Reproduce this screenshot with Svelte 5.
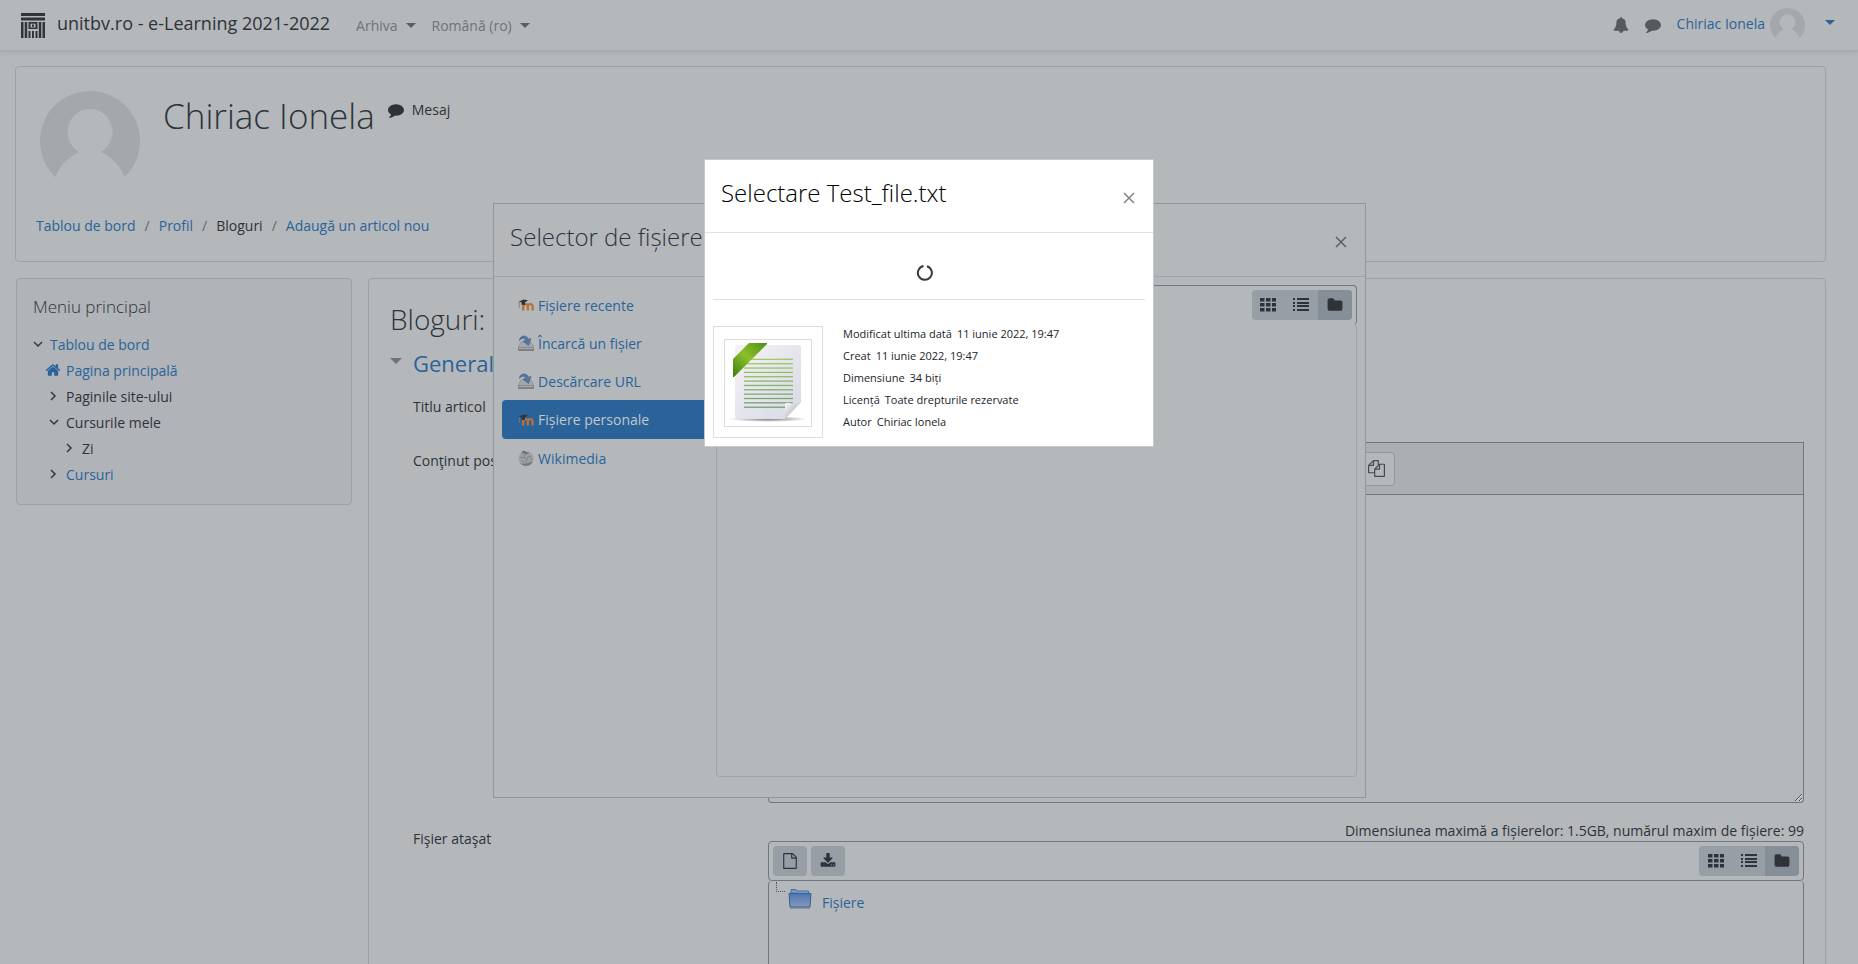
<script>
  const icons = {
    bell: 'M912 1696q0-16-16-16-59 0-101.5-42.5t-42.5-101.5q0-16-16-16t-16 16q0 73 51.5 124.5t124.5 51.5q16 0 16-16zm816-288q0 52-38 90t-90 38h-448q0 106-75 181t-181 75-181-75-75-181h-448q-52 0-90-38t-38-90q50-42 91-88t85-119.5 74.5-158.5 50-206 19.5-260q0-152 117-282.5t307-158.5q-8-19-8-39 0-40 28-68t68-28 68 28 28 68q0 20-8 39 190 28 307 158.5t117 282.5q0 139 19.5 260t50 206 74.5 158.5 85 119.5 91 88z',
    comment: 'M1792 896q0 174-120 321.5t-326 233-450 85.5q-70 0-145-8-198 175-460 242-49 14-114 22-17 2-30.5-9t-17.5-29v-1q-3-4-.5-12t2-10 4.5-9.5l6-9 7-8.5 8-9q7-8 31-34.5t34.5-38 31-39.5 32.5-51 27-59 26-76q-157-89-247.5-220t-90.5-281q0-130 71-248.5t191-204.5 286-136.5 348-50.5q244 0 450 85.5t326 233 120 321.5z',
    home: 'M1472 992v480q0 26-19 45t-45 19h-384v-384h-256v384h-384q-26 0-45-19t-19-45v-480q0-1 .5-3t.5-3l575-474 575 474q1 2 1 6zm223-69l-62 74q-8 9-21 11h-3q-13 0-21-7l-692-577-692 577q-12 8-24 7-13-2-21-11l-62-74q-8-10-7-23.5t11-21.5l719-599q32-26 76-26t76 26l244 204v-195q0-14 9-23t23-9h192q14 0 23 9t9 23v408l219 182q10 8 11 21.5t-7 23.5z',
    folder: 'M1728 608v704q0 92-66 158t-158 66h-1216q-92 0-158-66t-66-158v-960q0-92 66-158t158-66h320q92 0 158 66t66 158v32h672q92 0 158 66t66 158z',
    file: 'M1596 380q28 28 48 76t20 88v1152q0 40-28 68t-68 28h-1344q-40 0-68-28t-28-68v-1600q0-40 28-68t68-28h896q40 0 88 20t76 48zm-444-244v376h376q-10-29-22-41l-313-313q-12-12-41-22zm384 1528v-1024h-416q-40 0-68-28t-28-68v-416h-768v1536h1280z',
    download: 'M1344 1344q0-26-19-45t-45-19-45 19-19 45 19 45 45 19 45-19 19-45zm256 0q0-26-19-45t-45-19-45 19-19 45 19 45 45 19 45-19 19-45zm128-224v320q0 40-28 68t-68 28h-1472q-40 0-68-28t-28-68v-320q0-40 28-68t68-28h465l135 136q58 56 136 56t136-56l136-136h464q40 0 68 28t28 68zm-325-569q17 41-14 70l-448 448q-18 19-45 19t-45-19l-448-448q-31-29-14-70 17-39 59-39h256v-448q0-26 19-45t45-19h256q26 0 45 19t19 45v448h256q42 0 59 39z',
    files: 'M1696 384q40 0 68 28t28 68v1216q0 40-28 68t-68 28h-960q-40 0-68-28t-28-68v-288h-544q-40 0-68-28t-28-68v-672q0-40 20-88t48-76l408-408q28-28 76-48t88-20h416q40 0 68 28t28 68v328q68-40 128-40h416zm-544 213l-299 299h299v-299zm-640-384l-299 299h299v-299zm196 647l316-316v-416h-384v416q0 40-28 68t-68 28h-416v640h512v-256q0-40 20-88t48-76zm956 804v-1152h-384v416q0 40-28 68t-68 28h-416v640h896z'
  };

  const tree = [
    { text: 'Tablou de bord', level: 0, mark: 'down', link: true },
    { text: 'Pagina principală', level: 1, mark: 'home', link: true },
    { text: 'Paginile site-ului', level: 1, mark: 'right' },
    { text: 'Cursurile mele', level: 1, mark: 'down' },
    { text: 'Zi', level: 2, mark: 'right' },
    { text: 'Cursuri', level: 1, mark: 'right', link: true }
  ];

  const repos = [
    { text: 'Fișiere recente', icon: 'moodle' },
    { text: 'Încarcă un fișier', icon: 'upload' },
    { text: 'Descărcare URL', icon: 'upload' },
    { text: 'Fișiere personale', icon: 'moodle' },
    { text: 'Wikimedia', icon: 'wiki' }
  ];
  let activeRepo = $state(3);

  const details = [
    ['Modificat ultima dată', '11 iunie 2022, 19:47'],
    ['Creat', '11 iunie 2022, 19:47'],
    ['Dimensiune', '34 biți'],
    ['Licență', 'Toate drepturile rezervate'],
    ['Autor', 'Chiriac Ionela']
  ];
  const lines = [0, 1, 2, 3, 4, 5, 6, 7, 8, 9, 10, 11];
</script>

{#snippet fa(name, size)}
  <svg class="fa" width={size} height={size} viewBox="0 0 1792 1792" aria-hidden="true"><path d={icons[name]} /></svg>
{/snippet}

{#snippet avatar(size)}
  <svg class="avatar" width={size} height={size} viewBox="0 0 100 100" aria-hidden="true">
    <path fill="#a4a8ab" d="M50 0a50 50 0 0 1 34.500 86.200C81 75 73 67 61 61A22.500 23 0 1 0 39 61C27 67 19 75 15.500 86.200A50 50 0 0 1 50 0z" />
  </svg>
{/snippet}

{#snippet closeIcon()}
  <svg width="12" height="12" viewBox="0 0 12 12" aria-hidden="true"><path d="M1 1l10 10M11 1L1 11" fill="none" stroke="currentColor" stroke-width="1.500" /></svg>
{/snippet}

{#snippet views()}
  <div class="views" role="group">
    <button type="button" aria-label="Pictograme">
      <svg width="16" height="14" viewBox="0 0 16 14" aria-hidden="true">
        {#each [0, 5, 10] as y}
          {#each [0, 6, 12] as x}<rect {x} {y} width="4.500" height="3.500" />{/each}
        {/each}
      </svg>
    </button>
    <button type="button" aria-label="Listă">
      <svg width="16" height="14" viewBox="0 0 16 14" aria-hidden="true">
        {#each [0, 4, 7, 11] as y}<rect x="0" {y} width="2" height="2" /><rect x="4" {y} width="12" height="2" />{/each}
      </svg>
    </button>
    <button type="button" class="on" aria-label="Arbore">{@render fa('folder', 16)}</button>
  </div>
{/snippet}

<div class="page">
  <nav class="navbar">
    <a class="brand" href="#acasa">
      <svg width="24" height="25" viewBox="0 0 24 25" aria-hidden="true">
        <path d="M0 0h24v3H0zM0 4.500h24V7.500H0zM0 9h2.500v16H0zM3.700 9h2.500v16H3.700zM17.800 9h2.500v16h-2.500zM21.500 9H24v16h-2.500zM7.500 9h9v7h-9zM7.500 18h2v7h-2zM11 18h2v7h-2zM14.500 18h2v7h-2z" fill="#30343b" />
        <path d="M9.500 10.700h5v3.800h-5z" fill="#b4b8bb" /><path d="M11 11.500h2v2.200h-2z" fill="#30343b" />
      </svg>
      <span>unitbv.ro - e-Learning 2021-2022</span>
    </a>
    <button class="menu">Arhiva <i class="caret"></i></button>
    <button class="menu">Română (ro) <i class="caret"></i></button>
    <span class="grow"></span>
    <button class="navicon" aria-label="Notificări">{@render fa('bell', 16)}</button>
    <button class="navicon" aria-label="Mesaje">{@render fa('comment', 16)}</button>
    <button class="user"><span>Chiriac Ionela</span>{@render avatar(35)}<i class="caret"></i></button>
  </nav>

  <header class="card head">
    <div class="who">
      {@render avatar(100)}
      <h1>Chiriac Ionela</h1>
      <button class="message">{@render fa('comment', 16)}<span>Mesaj</span></button>
    </div>
    <ol class="crumbs">
      <li><a href="#bord">Tablou de bord</a></li>
      <li><a href="#profil">Profil</a></li>
      <li>Bloguri</li>
      <li><a href="#nou">Adaugă un articol nou</a></li>
    </ol>
  </header>

  <div class="columns">
    <aside class="card side">
      <h5>Meniu principal</h5>
      <ul>
        {#each tree as node}
          <li class="level{node.level}">
            <span class="mark">
              {#if node.mark === 'home'}
                {@render fa('home', 16)}
              {:else}
                <svg class="chevron" width="10" height="10" viewBox="0 0 10 10" aria-hidden="true"><path d={node.mark === 'down' ? 'M1 3l4 4 4-4' : 'M2 1l4 4-4 4'} /></svg>
              {/if}
            </span>
            {#if node.link}<a href="#nod">{node.text}</a>{:else}<span>{node.text}</span>{/if}
          </li>
        {/each}
      </ul>
    </aside>

    <main class="card main">
      <h2>Bloguri:</h2>
      <h3><i class="fold"></i><a href="#general">General</a></h3>
      <form>
        <div class="row first">
          <label for="title">Titlu articol</label>
          <input id="title" type="text" />
        </div>
        <div class="row">
          <label for="body">Conţinut postare</label>
          <div class="editor">
            <div class="etools"><button type="button" aria-label="Gestionare fișiere">{@render fa('files', 17)}</button></div>
            <textarea id="body"></textarea>
          </div>
        </div>
        <div class="row attach">
          <span class="label">Fişier ataşat</span>
          <div>
            <p class="limits">Dimensiunea maximă a fișierelor: 1.5GB, numărul maxim de fișiere: 99</p>
            <div class="ftools">
              <button class="tool" type="button" aria-label="Adaugă">{@render fa('file', 16)}</button>
              <button class="tool" type="button" aria-label="Descarcă">{@render fa('download', 16)}</button>
              <span class="grow"></span>
              {@render views()}
            </div>
            <div class="files">
              <i class="branch"></i>
              <svg width="24" height="22" viewBox="0 0 24 22" aria-hidden="true">
                <defs><linearGradient id="fold" x1="0" y1="0" x2="0" y2="1"><stop offset="0" stop-color="#4d77b4" /><stop offset="1" stop-color="#8499b8" /></linearGradient></defs>
                <path d="M3 5V1.500h5l1 1.500h11.500V6z" fill="#7f9cc0" stroke="#466f9f" />
                <path d="M1 5.500h22l-1 13.500H2z" fill="url(#fold)" stroke="#35629c" />
                <path d="M2 20h20" stroke="#6c7276" />
              </svg>
              <a href="#fisiere">Fișiere</a>
            </div>
          </div>
        </div>
      </form>
    </main>
  </div>
</div>

<div class="layer">
  <section class="picker" aria-label="Selector de fișiere">
    <div class="phead"><h4>Selector de fișiere</h4><button class="close" aria-label="Închide">{@render closeIcon()}</button></div>
    <div class="pbody">
      <div class="repos">
        {#each repos as repo, i}
          <button class:active={i === activeRepo} onclick={() => (activeRepo = i)}>
            <svg width="16" height="16" viewBox="0 0 16 16" aria-hidden="true">
              {#if repo.icon === 'moodle'}
                <path d="M5.200 13.500V9.500a2.200 2.200 0 0 1 4.600 0V13.500M9.800 9.500a2.300 2.300 0 0 1 4.800 0V13.500" fill="none" stroke="#b9703a" stroke-width="2.300" />
                <path d="M0.500 4.800L5.500 2.500l4.500.7-3 2.300v2.500L3.500 7.700V5.300z" fill="#30343b" /><path d="M1.300 5v6" stroke="#777b7e" stroke-width=".8" />
              {:else if repo.icon === 'upload'}
                <path d="M3 7h10l3 5.500H0z" fill="#a3a7ab" stroke="#85898c" stroke-width=".6" /><path d="M0 12.500h16V16H0z" fill="#7d8184" /><path d="M1 13.500h14" stroke="#a6aaad" />
                <path d="M1.500 5.500C1.500.500 8.500-1 10.500 4.200L13 3.500 10.500 10.500 5 6.200l2.500-.9C6.500 2.500 3.500 2.800 1.500 5.500z" fill="#57759e" stroke="#3f5f88" stroke-width=".6" />
              {:else}
                <circle cx="8" cy="8.500" r="7.500" fill="#9da1a3" />
                <path d="M2 13a7.500 7.500 0 0 0 13-2c-4 2-9 4-13 2z" fill="#74787a" />
                <path d="M4 3l3 1.500M7 4.500L6 8l3 1.500L10.500 6l3 1M2 7l4 1M9 9.500l-1 4M3.500 11l3 1M12 8.500l2.500 1" fill="none" stroke="#7d8183" stroke-width=".9" />
                <path d="M4 2.500l2-1.200 2 2.200 2.500-1" fill="none" stroke="#5d6163" stroke-width="1.200" />
              {/if}
            </svg>
            <span>{repo.text}</span>
          </button>
        {/each}
      </div>
      <div class="browse">
        <div class="btools">{@render views()}</div>
        <div class="blist"></div>
      </div>
    </div>
  </section>
</div>

<div class="layer top">
  <section class="select" aria-label="Selectare Test_file.txt">
    <div class="phead"><h4>Selectare Test_file.txt</h4><button class="close" aria-label="Închide">{@render closeIcon()}</button></div>
    <div class="loading">
      <svg width="18" height="18" viewBox="0 0 18 18" aria-hidden="true"><path d="M11 2.200A7 7 0 1 1 7.500 2" fill="none" stroke="#373a3c" stroke-width="2" /></svg>
    </div>
    <div class="info">
      <div class="thumb">
        <svg width="86" height="86" viewBox="0 0 86 86" aria-hidden="true">
          <defs>
            <linearGradient id="paper" x1="0" y1="0" x2="1" y2="1"><stop offset="0" stop-color="#f3f3f6" /><stop offset="1" stop-color="#d7d8e3" /></linearGradient>
            <linearGradient id="ribbon" x1="0" y1="1" x2="1" y2="0"><stop offset="0" stop-color="#3c7d0c" /><stop offset=".5" stop-color="#8cc02a" /><stop offset="1" stop-color="#4c8e12" /></linearGradient>
            <linearGradient id="ink" gradientUnits="userSpaceOnUse" x1="0" y1="18" x2="0" y2="70"><stop offset="0" stop-color="#a2cc5c" /><stop offset="1" stop-color="#719a74" /></linearGradient>
            <linearGradient id="curl" x1="0" y1="0" x2="1" y2="1"><stop offset="0" stop-color="#ffffff" /><stop offset=".5" stop-color="#c9cad2" /><stop offset=".6" stop-color="#8f9098" /></linearGradient>
            <radialGradient id="shade"><stop offset="0" stop-color="#777" /><stop offset="1" stop-color="#777" stop-opacity="0" /></radialGradient>
          </defs>
          <ellipse cx="43" cy="79" rx="39" ry="3" fill="url(#shade)" />
          <path d="M13 5h60a3 3 0 0 1 3 3v54L60 79H13a3 3 0 0 1-3-3V8a3 3 0 0 1 3-3z" fill="url(#paper)" />
          {#each lines as n}
            <rect x="19" y={18.700 + n * 4.350} width={n === 11 ? 42 : 49} height="1.300" fill="url(#ink)" />
          {/each}
          <path d="M60 79V66q0-4 4-3 6 2 12-1z" fill="url(#curl)" />
          <path d="M24 3h18v1L9 37H8V19z" fill="url(#ribbon)" />
        </svg>
      </div>
      <dl>
        {#each details as [name, value]}
          <div><dt>{name}</dt><dd>{value}</dd></div>
        {/each}
      </dl>
    </div>
  </section>
</div>

<style>
  :global(body) {
    margin: 0;
    overflow: hidden;
    background: #b4b8bb;
    color: #2e3339;
    font: 14px/21px "Open Sans", "Noto Sans", sans-serif;
  }
  :global(*) { box-sizing: border-box; }
  button { border: 0; padding: 0; background: none; color: inherit; font: inherit; cursor: pointer; }
  a { color: #2a639a; text-decoration: none; }
  h1, h2, h3, h4, h5, ul, ol, p, dl, dd { margin: 0; padding: 0; }
  h1, h2, h4, h5 { font-weight: 300; }
  ul, ol { list-style: none; }
  svg { display: block; flex: none; }
  .fa { fill: currentColor; }
  .grow { flex: 1; }
  .card { border: 1px solid #9da1a4; border-radius: 4px; }
  .caret { border: 5px solid transparent; border-top-color: currentColor; border-bottom: 0; }

  .page { height: 100vh; overflow: hidden; }
  .navbar {
    display: flex; align-items: center; height: 51px; padding: 0 23px 0 21px;
    border-bottom: 1px solid #a8acaf; box-shadow: 0 2px 4px #a8acaf;
  }
  .brand { display: flex; align-items: center; gap: 12px; margin-right: 26px; color: #2e3339; font-size: 18px; line-height: 24px; }
  .brand span { padding-bottom: 4px; }
  .menu { display: flex; align-items: center; gap: 8px; margin-right: 16px; color: #6f7376; }
  .menu .caret { color: #5a5e61; }
  .navicon { margin-right: 16px; color: #555a5d; }
  .user { display: flex; align-items: center; gap: 5px; color: #2a639a; }
  .user span { padding-bottom: 4px; }
  .user .caret { margin: 0 0 6px 15px; }

  .head { margin: 15px 32px 0 15px; padding: 24px 20px; height: 196px; }
  .who { display: flex; align-items: flex-start; padding-left: 4px; }
  h1 { margin-left: 23px; font-size: 35px; line-height: 50px; }
  .message { display: flex; align-items: center; gap: 8px; margin: 8px 0 0 13px; }
  .crumbs { display: flex; margin-top: 24px; }
  .crumbs li + li::before { content: "/"; padding: 0 9px; color: #63676b; }

  .columns { display: grid; grid-template-columns: 336px 1fr; gap: 16px; align-items: start; margin: 16px 32px 0 16px; }
  .side { height: 227px; padding: 15px 16px; background: #b0b3b8; }
  h5 { font-size: 17px; line-height: 26px; }
  .side ul { margin-top: 11px; }
  .side li { display: flex; align-items: center; height: 26px; }
  .side .level1 { padding-left: 16px; }
  .side .level2 { padding-left: 32px; }
  .mark { display: flex; width: 17px; color: #2a639a; }
  .mark .fa { margin-left: -4px; }
  .chevron path { fill: none; stroke: #33383d; stroke-width: 1.500; }

  .main { padding: 21px 21px 0 21px; height: 800px; }
  h2 { font-size: 28px; line-height: 38px; }
  h3 { display: flex; align-items: center; gap: 11px; margin-top: 9px; font-size: 22px; font-weight: 400; line-height: 32px; }
  .fold { border: 6px solid transparent; border-top-color: #6f7477; border-bottom: 0; margin-bottom: 4px; }
  form { padding-left: 23px; }
  .row { display: grid; grid-template-columns: 355px 1fr; align-items: start; }
  .row.first { margin: 9px 0 18px; height: 36px; }
  label, .label { padding-top: 8px; }
  input { width: 400px; height: 36px; border: 1px solid #6f7782; background: none; font: inherit; }
  .editor { display: flex; flex-direction: column; }
  .etools { display: flex; align-items: center; height: 53px; padding-left: 589px; border: 1px solid #6f7782; background: #abafb2; }
  .etools button { display: grid; place-items: center; width: 37px; height: 34px; border: 1px solid #92969a; border-radius: 4px; background: #b4b8bb; color: #444a51; }
  textarea { height: 308px; border: 1px solid #6f7782; border-top: 0; border-radius: 0 0 4px 4px; background: none; font: inherit; resize: both; }
  .attach { margin-top: 17px; }
  .limits { text-align: right; }
  .ftools { display: flex; align-items: center; gap: 4px; height: 40px; padding: 0 4px; border: 1px solid #6f7782; border-radius: 4px; }
  .tool { display: grid; place-items: center; width: 34px; height: 30px; border-radius: 4px; background: #979ea6; }
  .files { display: flex; align-items: flex-start; height: 200px; padding: 1px 7px; border: 1px solid #6f7782; border-top: 0; border-radius: 4px; }
  .branch { width: 9px; height: 10px; border: 1px dotted #50565a; border-width: 0 0 1px 1px; }
  .files svg { margin: 6px 0 0 3px; }
  .files a { margin: 10px 0 0 10px; }

  .views { display: flex; border-radius: 4px; overflow: hidden; background: #979ea6; }
  .views button { display: grid; place-items: center; width: 33px; height: 30px; }
  .views button.on { width: 34px; background: #868e97; }
  .views svg { fill: #2e333a; }

  .layer { position: fixed; inset: 0; display: flex; justify-content: center; align-items: flex-start; padding: 203px 0 0 1px; }
  .top { padding: 159px 0 0; }
  .picker { width: 47%; height: 595px; border: 1px solid #929699; background: #b4b8bb; }
  .phead { display: flex; align-items: center; justify-content: space-between; height: 73px; padding: 0 18px 6px 16px; border-bottom: 1px solid #a0a4a7; }
  h4 { font-size: 24px; line-height: 34px; }
  .close { padding-top: 9px; color: #5b6064; }
  .pbody { display: flex; padding: 8px; }
  .repos { width: 214px; padding-top: 1px; }
  .repos button { display: flex; align-items: center; gap: 4px; width: 214px; height: 38px; padding-left: 16px; border-radius: 4px; color: #2a639a; }
  .repos button.active { height: 39px; background: #2a639a; color: #c3c7ca; }
  .browse { display: flex; flex-direction: column; flex: 1; }
  .btools { display: flex; justify-content: flex-end; align-items: flex-start; height: 40px; padding: 4px; border: 1px solid #6f7782; border-bottom: 0; border-radius: 4px; }
  .blist { height: 452px; border: 1px solid #a0a4a7; border-top: 0; border-radius: 4px; }

  .select { width: 450px; height: 288px; border: 1px solid #c6c8ca; background: #fff; color: #212529; }
  .select .phead { border-color: #dee2e6; color: #000; }
  .select .close { color: #808386; }
  .loading { display: grid; place-items: center; height: 67px; margin: 0 8px; padding: 13px 8px 0 0; border-bottom: 1px solid #dee2e6; }
  .info { display: flex; align-items: flex-start; gap: 20px; padding: 26px 8px 0; }
  .thumb { padding: 12px 10px 10px; border: 1px solid #ddd; }
  .thumb svg { border: 1px solid #ddd; width: 88px; height: 88px; }
  dl { font-size: 11px; line-height: 16px; }
  dl div { display: flex; gap: 5px; margin-bottom: 6px; }
</style>
